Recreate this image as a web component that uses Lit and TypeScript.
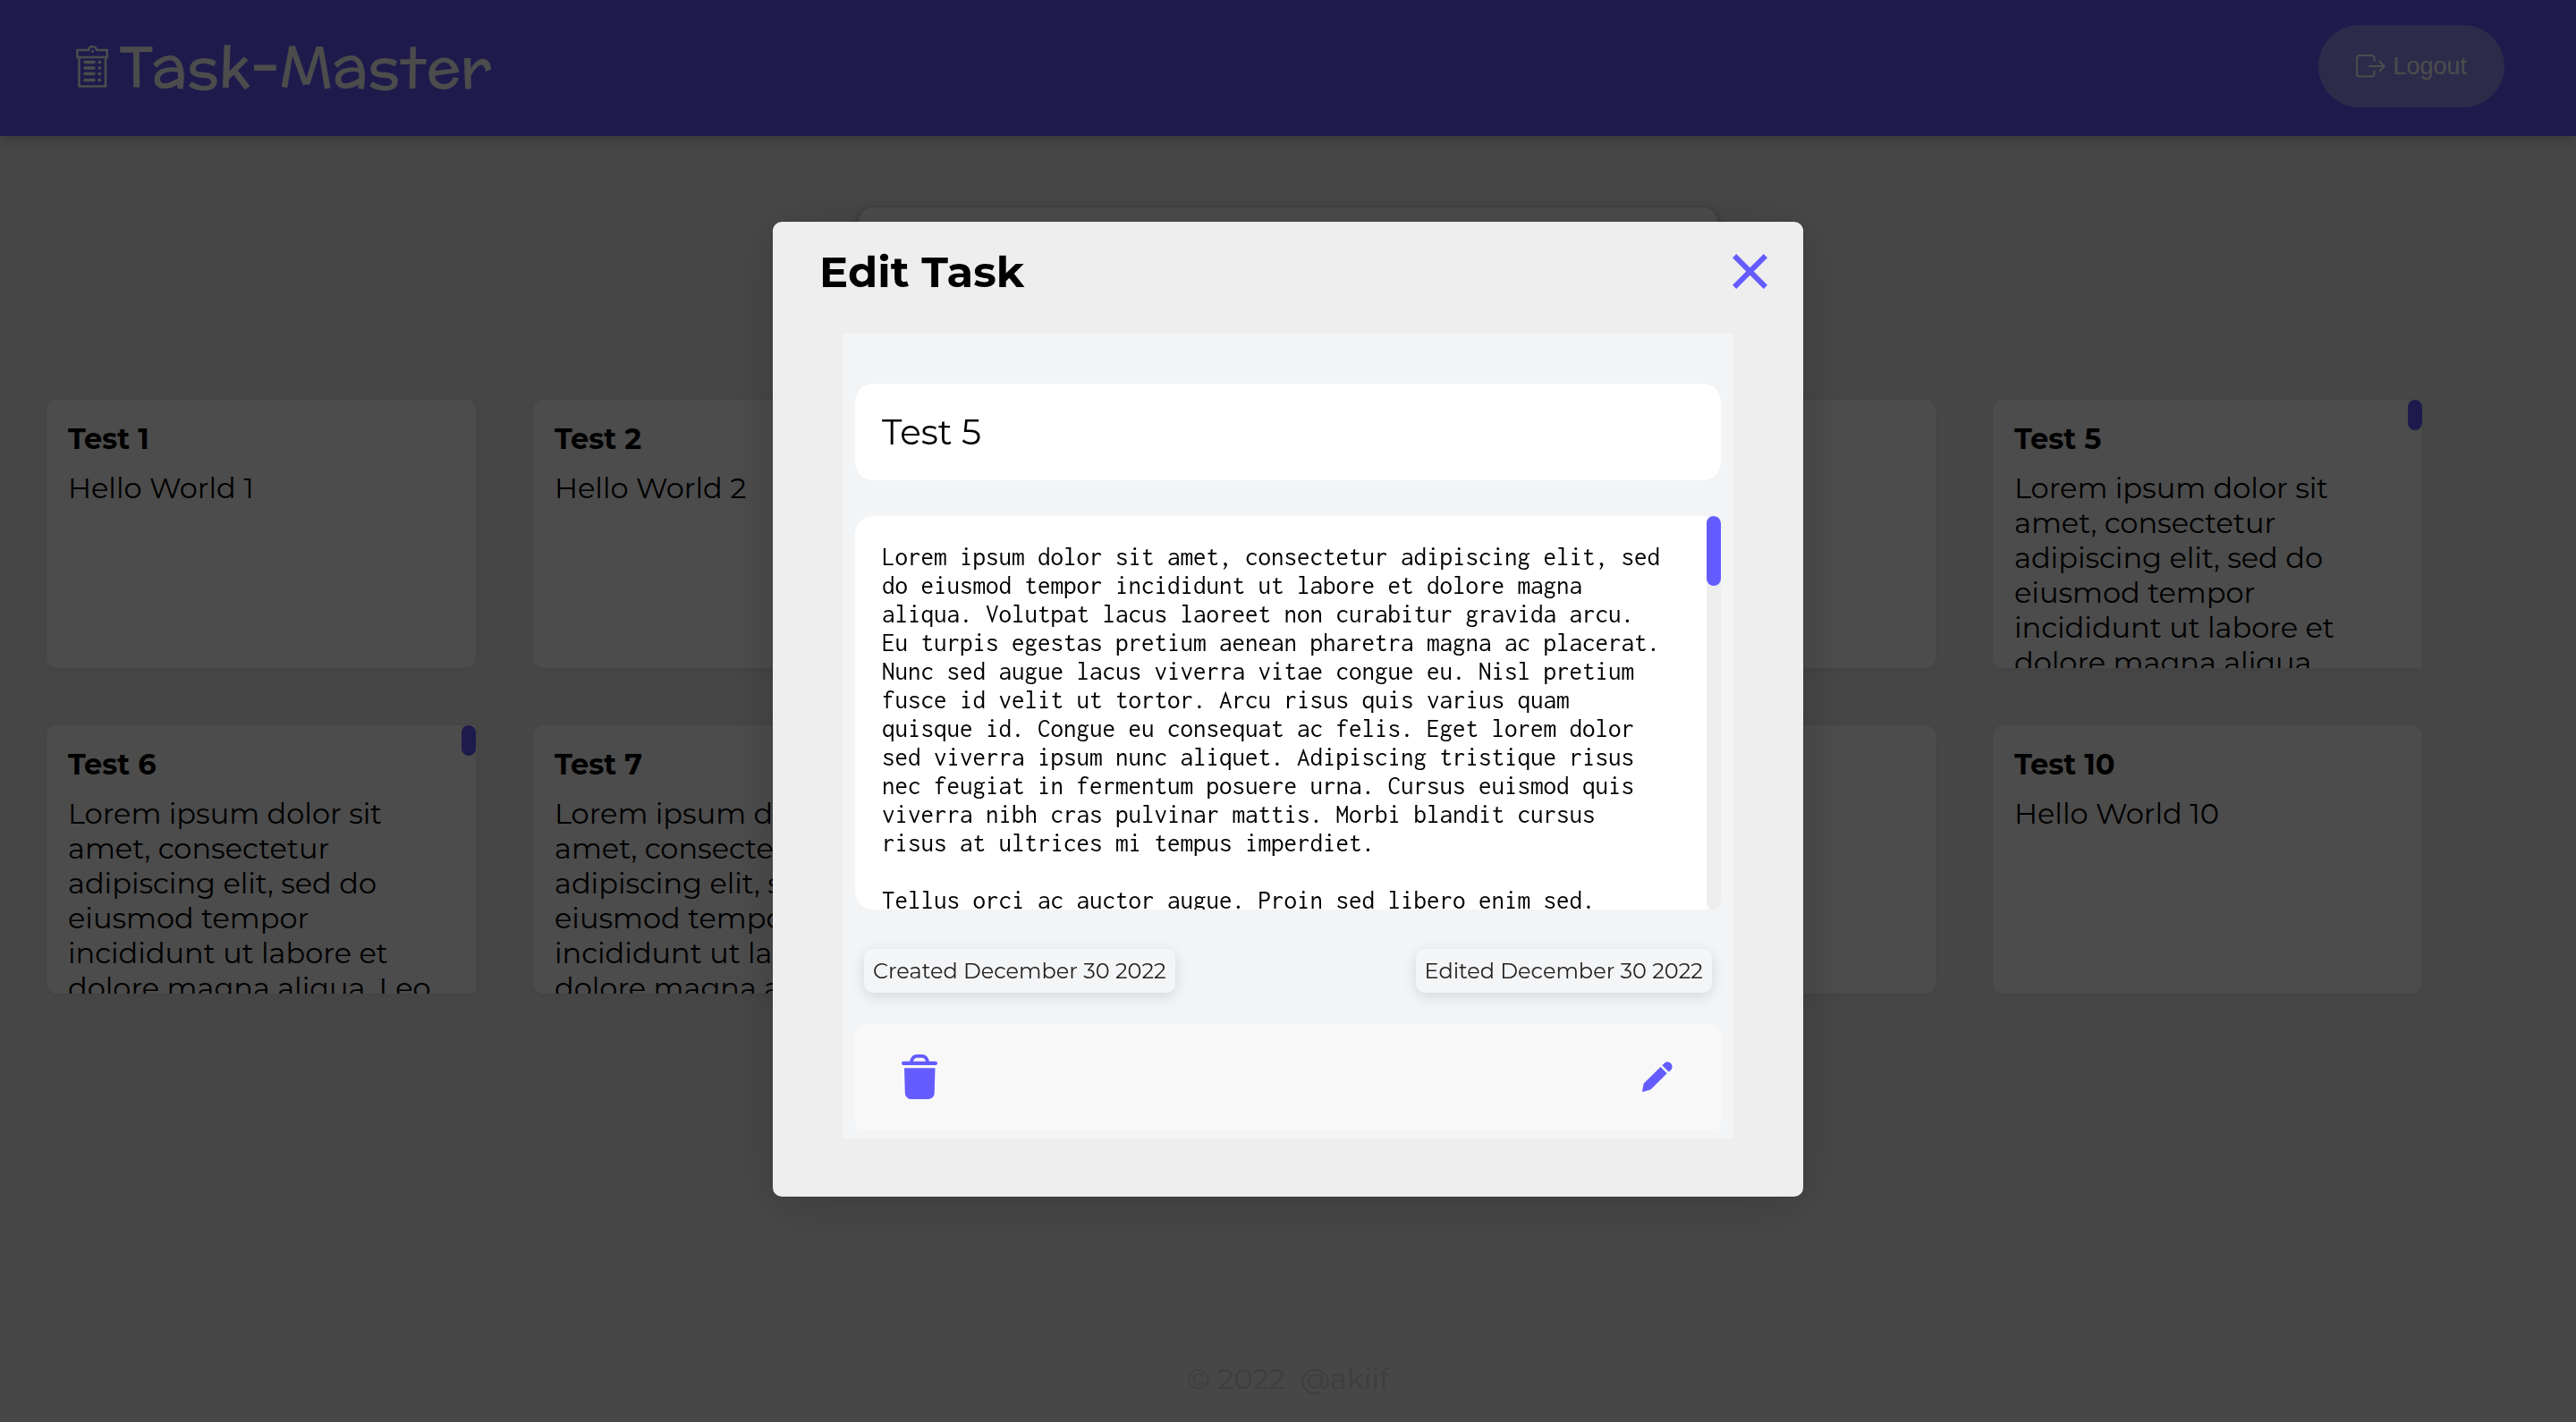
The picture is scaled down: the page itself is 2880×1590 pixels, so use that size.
import { LitElement, html, css, nothing } from "lit";
import { customElement, property, state } from "lit/decorators.js";

interface Task {
  id: number;
  title: string;
  body: string;
}

const LOREM =
  "Lorem ipsum dolor sit amet, consectetur adipiscing elit, sed do eiusmod tempor incididunt ut labore et dolore magna aliqua.";

const FIRST_PARAGRAPH =
  LOREM +
  " Volutpat lacus laoreet non curabitur gravida arcu. Eu turpis egestas pretium aenean pharetra magna ac placerat." +
  " Nunc sed augue lacus viverra vitae congue eu. Nisl pretium fusce id velit ut tortor. Arcu risus quis varius quam" +
  " quisque id. Congue eu consequat ac felis. Eget lorem dolor sed viverra ipsum nunc aliquet. Adipiscing tristique" +
  " risus nec feugiat in fermentum posuere urna. Cursus euismod quis viverra nibh cras pulvinar mattis. Morbi blandit" +
  " cursus risus at ultrices mi tempus imperdiet.";

const LONG_TEXT = FIRST_PARAGRAPH + "\n\nTellus orci ac auctor augue. Proin sed libero enim sed.";

const TASKS: Task[] = [
  { id: 1, title: "Test 1", body: "Hello World 1" },
  { id: 2, title: "Test 2", body: "Hello World 2" },
  { id: 3, title: "Test 3", body: "" },
  { id: 4, title: "Test 4", body: "" },
  { id: 5, title: "Test 5", body: LONG_TEXT },
  { id: 6, title: "Test 6", body: LOREM + " Leo vel fringilla est." },
  { id: 7, title: "Test 7", body: LOREM + " Leo vel fringilla est." },
  { id: 8, title: "Test 8", body: "" },
  { id: 9, title: "Test 9", body: "" },
  { id: 10, title: "Test 10", body: "Hello World 10" },
];

@customElement("app-header")
class AppHeader extends LitElement {
  static styles = css`
    :host {
      display: block;
    }
    .bar {
      display: flex;
      align-items: center;
      justify-content: space-between;
      padding: 28px 80px 32px 85px;
      background: #645cff;
      box-shadow: 0 4px 16px rgba(0, 0, 0, 0.25);
    }
    .brand {
      display: flex;
      align-items: center;
      gap: 12px;
      margin: 0;
      color: #fff;
      font-family: McLaren, "Comic Neue", Inter, cursive;
      font-size: 64px;
      line-height: 84px;
      font-weight: 400;
    }
    .logout {
      display: flex;
      align-items: center;
      gap: 8px;
      height: 92px;
      padding: 0 42px;
      border: 0;
      border-radius: 46px;
      background: #968ff7;
      color: #fff;
      font: 27px "Liberation Sans", Arial, sans-serif;
    }
  `;

  render() {
    return html`
      <header class="bar">
        <h1 class="brand">
          <svg width="36" height="47" viewBox="0 0 36 47" fill="none" stroke="currentColor" stroke-width="2.500" aria-hidden="true">
            <path d="M14 5H1.300v8h33.400V5H23a4.500 4 0 0 0-9 0zM3.500 13v32.500h29.500V13" />
            <path d="M18.500 5v3" />
            <path
              stroke-width="3.500"
              stroke-linecap="round"
              d="M10 18.500h10M10 25h10M10 31.500h10M10 38.500h10M26 18.500h.500M26 25h.500M26 31.500h.500M26 38.500h.500"
            />
          </svg>
          <span>Task-Master</span>
        </h1>
        <button class="logout" type="button">
          <svg width="33" height="26" viewBox="0 0 33 26" fill="none" stroke="currentColor" stroke-width="2" aria-hidden="true">
            <path d="M20.500 8V4a3 3 0 0 0-3-3H4a3 3 0 0 0-3 3v17.500a3 3 0 0 0 3 3h13.500a3 3 0 0 0 3-3V18" />
            <path d="M14.500 13H31.500M26 7.200l5.800 5.800-5.800 5.800" />
          </svg>
          <span>Logout</span>
        </button>
      </header>
    `;
  }
}

@customElement("task-card")
class TaskCard extends LitElement {
  @property({ attribute: false }) task!: Task;

  static styles = css`
    :host {
      display: block;
    }
    .card {
      position: relative;
      box-sizing: border-box;
      height: 300px;
      padding: 24px;
      overflow: hidden;
      border-radius: 12px;
      background: #fff;
      box-shadow: 0 2px 16px rgba(0, 0, 0, 0.08);
      color: #000;
    }
    .scrolls {
      padding-right: 40px;
      border-radius: 12px 4px 4px 12px;
    }
    .title {
      margin: 0 0 16px;
      font-size: 32px;
      line-height: 39px;
      font-weight: 700;
    }
    .body {
      margin: 0;
      font-size: 32px;
      line-height: 39px;
      font-weight: 400;
    }
    .thumb {
      position: absolute;
      top: 0;
      right: 0;
      width: 16px;
      height: 34px;
      border-radius: 8px;
      background: #645cff;
    }
  `;

  render() {
    const scrolls = this.task.body.length > 100;
    return html`
      <article class="card ${scrolls ? "scrolls" : ""}">
        <h2 class="title">${this.task.title}</h2>
        <p class="body">${this.task.body}</p>
        ${scrolls ? html`<div class="thumb"></div>` : nothing}
      </article>
    `;
  }
}

@customElement("edit-task-dialog")
class EditTaskDialog extends LitElement {
  @property({ attribute: false }) task!: Task;

  static styles = css`
    :host {
      display: block;
      width: 40%;
    }
    .dialog {
      border-radius: 10px;
      background: #eee;
      box-shadow: 0 8px 60px rgba(0, 0, 0, 0.2);
      color: #000;
    }
    .head {
      display: flex;
      align-items: center;
      justify-content: space-between;
      padding: 26px 40px 39px 52px;
    }
    .heading {
      margin: 0;
      font-size: 48px;
      line-height: 60px;
      font-weight: 700;
    }
    .icon-button {
      display: flex;
      padding: 0;
      border: 0;
      background: none;
      color: #645cff;
    }
    .content {
      padding: 0 78px 65px;
    }
    .panel {
      display: flex;
      flex-direction: column;
      padding: 56px 14px 9px;
      background: #f2f4f6;
    }
    .field {
      box-sizing: border-box;
      width: 100%;
      margin: 0;
      border: 0;
      outline: 0;
      border-radius: 20px;
      background: #fff;
      color: #000;
    }
    .title-input {
      height: 108px;
      margin-bottom: 40px;
      padding: 0 30px;
      font: 400 39px Montserrat, Inter, sans-serif;
    }
    .text {
      position: relative;
      display: flex;
      overflow: hidden;
      border-radius: 20px 8px 8px 20px;
    }
    .text-input {
      height: 440px;
      padding: 30px 66px 0 30px;
      overflow: hidden;
      resize: none;
      font: 29px/32px Consolas, Inconsolata, "DejaVu Sans Mono", monospace;
    }
    .track {
      position: absolute;
      top: 0;
      right: 0;
      bottom: 0;
      width: 16px;
      border-radius: 8px;
      background: #eee;
    }
    .thumb {
      height: 78px;
      border-radius: 8px;
      background: #645cff;
    }
    .dates {
      display: flex;
      justify-content: space-between;
      padding: 44px 10px 35px;
    }
    .date {
      padding: 10px;
      border-radius: 10px;
      background: #f4f5f7;
      box-shadow: 0 4px 16px rgba(0, 0, 0, 0.12);
      color: #222;
      font-size: 24px;
      line-height: 29px;
      font-weight: 400;
    }
    .actions {
      display: flex;
      align-items: center;
      justify-content: space-between;
      height: 119px;
      padding: 0 54px 0 52px;
      border-radius: 10px;
      background: #f8f8f9;
    }
  `;

  render() {
    return html`
      <section class="dialog" role="dialog" aria-modal="true" aria-labelledby="heading">
        <div class="head">
          <h2 class="heading" id="heading">Edit Task</h2>
          <button class="icon-button" type="button" aria-label="Close">
            <svg width="39" height="39" viewBox="0 0 39 39" fill="none" stroke="currentColor" stroke-width="6">
              <path d="M2.100 2.100L36.900 36.900M36.900 2.100L2.100 36.900" />
            </svg>
          </button>
        </div>
        <div class="content">
          <form class="panel">
            <input class="field title-input" type="text" aria-label="Title" .value=${this.task.title} />
            <div class="text">
              <textarea class="field text-input" aria-label="Description" .value=${this.task.body}></textarea>
              <div class="track"><div class="thumb"></div></div>
            </div>
            <div class="dates">
              <span class="date">Created December 30 2022</span>
              <span class="date">Edited December 30 2022</span>
            </div>
            <div class="actions">
              <button class="icon-button" type="button" aria-label="Delete">
                <svg width="40" height="50" viewBox="0 0 40 50" fill="currentColor">
                  <path d="M10.500 9.500C11.500 4.500 13.500 1.900 17 1.900h6c3.500 0 5.500 2.600 6.500 7.600" fill="none" stroke="currentColor" stroke-width="3.800" />
                  <rect y="7.700" width="40" height="4.300" rx="2" />
                  <path d="M3 15.300h34.500l-.8 27.700a7 7 0 0 1-7 7H10.800a7 7 0 0 1-7-7z" />
                </svg>
              </button>
              <button class="icon-button" type="button" aria-label="Save">
                <svg width="34" height="34" viewBox="0 0 34 34" fill="currentColor">
                  <path d="M20.500 6l7.200 7.300L9.500 31.300 1.300 33.700a1 1 0 0 1-1.200-1.200L1.700 24.600z" />
                  <path d="M22.300 4.200l2.200-2.300a5.300 5.300 0 0 1 7.500 7.500l-2.400 2.200z" />
                </svg>
              </button>
            </div>
          </form>
        </div>
      </section>
    `;
  }
}

@customElement("app-root")
class AppRoot extends LitElement {
  @state() private tasks = TASKS;
  @state() private editing = TASKS[4];

  static styles = css`
    :host {
      display: flex;
      flex-direction: column;
      min-height: 100vh;
      background: #eee;
      font-family: Montserrat, Inter, sans-serif;
    }
    .new-task {
      box-sizing: border-box;
      width: 33.3333%;
      height: 135px;
      margin: 80px auto;
      padding: 20px 30px;
      border-radius: 16px;
      background: #fff;
      box-shadow: 0 2px 12px rgba(0, 0, 0, 0.3);
    }
    .new-input {
      width: 100%;
      height: 100%;
      padding: 0;
      border: 0;
      background: none;
      font: inherit;
    }
    .grid {
      display: grid;
      grid-template-columns: repeat(auto-fill, 480px);
      gap: 64px;
      padding: 0 52px;
    }
    .footer {
      display: flex;
      justify-content: center;
      gap: 17px;
      margin-top: auto;
      padding: 64px 0 28px;
      color: #cfcfcf;
      font-size: 32px;
      line-height: 40px;
    }
    .author {
      color: inherit;
      text-decoration: none;
    }
    .overlay {
      position: fixed;
      inset: 0;
      display: flex;
      align-items: center;
      justify-content: center;
      padding-bottom: 5px;
      background: rgba(0, 0, 0, 0.7);
    }
  `;

  render() {
    return html`
      <app-header></app-header>
      <form class="new-task">
        <input class="new-input" type="text" aria-label="New task" />
      </form>
      <main class="grid">${this.tasks.map((task) => html`<task-card .task=${task}></task-card>`)}</main>
      <footer class="footer">
        <span>© 2022</span>
        <a class="author" href="#">@akiif</a>
      </footer>
      <div class="overlay">
        <edit-task-dialog .task=${this.editing}></edit-task-dialog>
      </div>
    `;
  }
}
